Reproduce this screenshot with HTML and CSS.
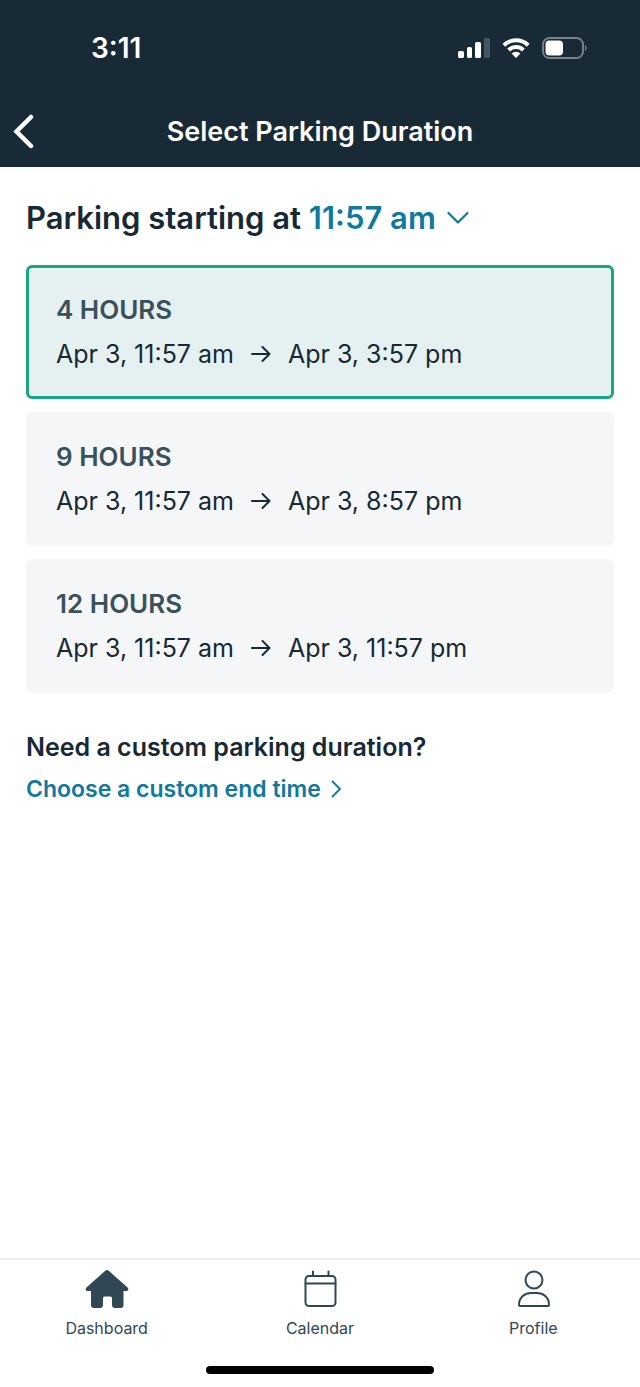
FILE: index.html
```html
<!DOCTYPE html>
<html lang="en">
<head>
<meta charset="utf-8">
<meta name="viewport" content="width=device-width, initial-scale=1">
<title>Select Parking Duration</title>
<link rel="stylesheet" href="styles.css">
</head>
<body>
<div class="app">
  <header class="header">
    <div class="status">
      <span class="clock">3:11</span>
      <div class="status-icons">
        <svg width="32" height="22" viewBox="0 0 32 22" fill="#fff" aria-hidden="true">
          <rect x="0" y="14" width="6" height="7" rx="1.5"/>
          <rect x="9" y="10" width="5" height="11" rx="1.5"/>
          <rect x="17" y="5" width="6" height="16" rx="1.5"/>
          <rect x="26" y="1" width="6" height="20" rx="1.5" fill="#465660"/>
        </svg>
        <svg width="28" height="22" viewBox="0 0 28 22" fill="none" stroke="#fff" stroke-width="4" aria-hidden="true">
          <path d="M1.8 8.2a17.5 17.5 0 0 1 24.4 0"/>
          <path d="M6.6 13a10.8 10.8 0 0 1 14.8 0"/>
          <path d="M14 21l-4.4-4.4a6.4 6.4 0 0 1 8.8 0z" fill="#fff" stroke="none"/>
        </svg>
        <svg width="45" height="22" viewBox="0 0 45 22" fill="none" aria-hidden="true">
          <rect x="1" y="1" width="40" height="20" rx="6.5" stroke="#75818a" stroke-width="2"/>
          <rect x="3.500" y="3.500" width="17.500" height="15" rx="4" fill="#fff"/>
          <path d="M43 8c2 .8 2 5.200 0 6z" fill="#75818a"/>
        </svg>
      </div>
    </div>
    <div class="titlebar">
      <button class="back" type="button" aria-label="Back">
        <svg width="24" height="36" viewBox="0 0 24 36" fill="none" stroke="#fff" stroke-width="4.500" stroke-linecap="round" stroke-linejoin="miter" aria-hidden="true"><path d="M19 4L4.500 18.500l14.500 14.500"/></svg>
      </button>
      <h1 class="title">Select Parking Duration</h1>
    </div>
  </header>

  <main class="content">
    <h2 class="start">Parking starting at
      <button class="start-time" type="button">11:57 am
        <svg width="22" height="14" viewBox="0 0 22 14" fill="none" stroke="currentColor" stroke-width="2.200" stroke-linecap="round" stroke-linejoin="round" aria-hidden="true"><path d="M1.500 2L11 11.500 20.500 2"/></svg>
      </button>
    </h2>

    <div class="options" role="radiogroup" aria-label="Parking duration">
      <label class="option">
        <input class="radio" type="radio" name="duration" value="4" checked>
        <span class="hours">4 HOURS</span>
        <span class="range">Apr 3, 11:57 am
          <svg class="arrow" viewBox="0 0 20 18" aria-hidden="true"><path d="M1 9h17.500M11.500 2l7 7-7 7"/></svg>
          Apr 3, 3:57 pm</span>
      </label>
      <label class="option">
        <input class="radio" type="radio" name="duration" value="9">
        <span class="hours">9 HOURS</span>
        <span class="range">Apr 3, 11:57 am
          <svg class="arrow" viewBox="0 0 20 18" aria-hidden="true"><path d="M1 9h17.500M11.500 2l7 7-7 7"/></svg>
          Apr 3, 8:57 pm</span>
      </label>
      <label class="option">
        <input class="radio" type="radio" name="duration" value="12">
        <span class="hours">12 HOURS</span>
        <span class="range">Apr 3, 11:57 am
          <svg class="arrow" viewBox="0 0 20 18" aria-hidden="true"><path d="M1 9h17.500M11.500 2l7 7-7 7"/></svg>
          Apr 3, 11:57 pm</span>
      </label>
    </div>

    <section class="custom">
      <h3 class="question">Need a custom parking duration?</h3>
      <a class="custom-link" href="#">Choose a custom end time
        <svg width="10" height="18" viewBox="0 0 10 18" fill="none" stroke="currentColor" stroke-width="1.800" stroke-linecap="round" stroke-linejoin="round" aria-hidden="true"><path d="M1.500 1.500L9 9l-7.500 7.500"/></svg>
      </a>
    </section>
  </main>

  <footer class="footer">
    <nav class="tabs">
      <a class="tab" href="#" aria-current="page">
        <svg width="44" height="40" viewBox="0 0 44 40" fill="#304853" aria-hidden="true"><path d="M20.300 .8Q22-.7 23.700 .8L42.300 17.300C44.200 19.200 43.200 21 41.500 21H38.500V35Q38.500 38 35.500 38H30Q27 38 27 35V28Q27 26.500 25.500 26.500H19.500Q18 26.500 18 28V35Q18 38 15 38H9Q6 38 6 35V21H2.500C.8 21-.2 19.200 1.700 17.300Z"/></svg>
        <span>Dashboard</span>
      </a>
      <a class="tab" href="#">
        <svg width="44" height="40" viewBox="0 0 44 40" fill="none" stroke="#304853" stroke-width="2" stroke-linecap="round" aria-hidden="true"><rect x="7.500" y="6" width="30" height="30" rx="3.500"/><path d="M7.500 13.500h30M15 1.500v4M30.500 1.500v4"/></svg>
        <span>Calendar</span>
      </a>
      <a class="tab" href="#">
        <svg width="44" height="40" viewBox="0 0 44 40" fill="none" stroke="#304853" stroke-width="2" stroke-linejoin="round" aria-hidden="true"><circle cx="23" cy="10" r="8.500"/><path d="M8 35C8 27 14 23 20 23h6c6 0 12 4 12 12q0 1-1 1H9q-1 0-1-1z"/></svg>
        <span>Profile</span>
      </a>
    </nav>
    <div class="home-indicator"></div>
  </footer>
</div>
</body>
</html>
```
FILE: styles.css
```css
* {
  box-sizing: border-box;
}

body {
  margin: 0;
  background: #fff;
  color: #172934;
  font-family: Inter, "Liberation Sans", sans-serif;
}

h1, h2, h3 {
  margin: 0;
  font-weight: 600;
}

button {
  padding: 0;
  border: 0;
  background: none;
  color: inherit;
  font: inherit;
  cursor: pointer;
}

a {
  text-decoration: none;
}

svg {
  flex: none;
}

.app {
  display: flex;
  flex-direction: column;
  min-height: 100vh;
}

.header {
  background: #182a35;
  color: #fff;
}

.status {
  display: flex;
  align-items: center;
  justify-content: space-between;
  height: 95px;
  padding: 0 53px 0 91px;
}

.clock {
  font-size: 28px;
  font-weight: 600;
}

.status-icons {
  display: flex;
  gap: 12px;
}

.titlebar {
  display: grid;
  grid-template-columns: 48px 1fr 48px;
  align-items: center;
  height: 72px;
}

.back {
  display: flex;
  padding-left: 12px;
}

.title {
  font-size: 27px;
  text-align: center;
}

.content {
  flex: 1;
  padding: 31px 26px;
}

.start {
  font-size: 31px;
  line-height: 40px;
}

.start-time {
  display: inline-flex;
  align-items: center;
  gap: 11px;
  color: #0f799f;
}

.options {
  display: grid;
  gap: 13px;
  margin-top: 27px;
}

.option {
  display: flex;
  flex-direction: column;
  gap: 12px;
  padding: 26px 27px;
  border: 3px solid #f4f6f8;
  border-radius: 6px;
  background: #f4f6f8;
  font-size: 25px;
  line-height: 32px;
  cursor: pointer;
}

.option:has(.radio:checked) {
  border-color: #18a682;
  background: #e5f0f0;
}

.radio {
  position: absolute;
  opacity: 0;
}

.hours {
  color: #3a515b;
  font-size: 26px;
  font-weight: 600;
}

.range {
  display: flex;
  align-items: center;
  gap: 17px;
}

.arrow {
  width: 20px;
  height: 18px;
  fill: none;
  stroke: currentColor;
  stroke-width: 2;
  stroke-linecap: round;
  stroke-linejoin: round;
}

.custom {
  margin-top: 38px;
}

.question {
  font-size: 25px;
  line-height: 32px;
}

.custom-link {
  display: inline-flex;
  align-items: center;
  gap: 10px;
  margin-top: 10px;
  color: #0f799f;
  font-size: 23px;
  font-weight: 600;
  line-height: 32px;
}

.footer {
  display: flex;
  flex-direction: column;
  align-items: center;
  gap: 28px;
  padding: 10px 0 13px;
  border-top: 2px solid #ededef;
}

.tabs {
  display: grid;
  grid-template-columns: repeat(3, 1fr);
  width: 100%;
}

.tab {
  display: flex;
  flex-direction: column;
  align-items: center;
  gap: 8px;
  color: #304853;
  font-size: 16px;
  line-height: 20px;
}

.home-indicator {
  width: 228px;
  height: 8px;
  border-radius: 4px;
  background: #000;
}
```
